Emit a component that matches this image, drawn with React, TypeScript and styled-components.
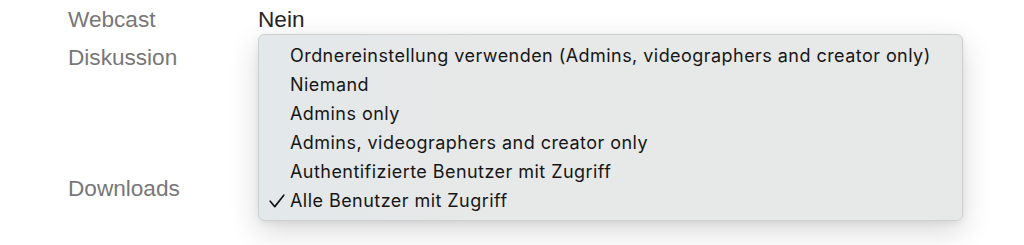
import React from "react";
import styled, { createGlobalStyle } from "styled-components";

const GlobalStyle = createGlobalStyle`
  html, body {
    margin: 0;
    padding: 0;
    background: #ffffff;
  }
  body {
    font-family: "Liberation Sans", Arial, sans-serif;
  }
`;

const SPage = styled.div`
  width: 1024px;
  height: 245px;
  overflow: hidden;
  padding: 1px 0 0 68px;
  box-sizing: border-box;
`;

const SRow = styled.div<{ $height: number }>`
  display: grid;
  grid-template-columns: 190px 1fr;
  height: ${(p) => p.$height}px;
  font-size: 22.6px;
  line-height: 38px;
`;

const SLabel = styled.div`
  color: #777777;
`;

const SValue = styled.div`
  position: relative;
  color: #262626;
`;

const SMenu = styled.ul`
  position: absolute;
  top: -5px;
  left: 0;
  width: 705px;
  margin: 0;
  padding: 6px 0 5px;
  box-sizing: border-box;
  list-style: none;
  background: linear-gradient(90deg, #e3e8ea 0%, #e7e8e8 30%, #e7e8e8 100%);
  border: 1px solid #cdcfcf;
  border-radius: 6px;
  box-shadow: 0 10px 30px rgba(0, 0, 0, 0.16), 0 2px 6px rgba(0, 0, 0, 0.06);
  font-family: Inter, "Liberation Sans", sans-serif;
  font-size: 18px;
  letter-spacing: 0.45px;
  line-height: 29px;
  color: #161616;
`;

const SItem = styled.li`
  position: relative;
  padding-left: 31px;
  white-space: nowrap;
`;

const SCheck = styled.svg`
  position: absolute;
  left: 10px;
  top: 8px;
`;

const OPTIONS = [
  "Ordnereinstellung verwenden (Admins, videographers and creator only)",
  "Niemand",
  "Admins only",
  "Admins, videographers and creator only",
  "Authentifizierte Benutzer mit Zugriff",
  "Alle Benutzer mit Zugriff",
];

const SELECTED = "Alle Benutzer mit Zugriff";

const App = () => (
  <>
    <GlobalStyle />
    <SPage>
      <SRow $height={38}>
        <SLabel>Webcast</SLabel>
        <SValue>Nein</SValue>
      </SRow>
      <SRow $height={131}>
        <SLabel>Diskussion</SLabel>
        <SValue>
          <SMenu>
            {OPTIONS.map((o) => (
              <SItem key={o}>
                {o === SELECTED && (
                  <SCheck width="16" height="14" viewBox="0 0 16 14">
                    <polyline
                      points="1.2,7.2 5.8,12.6 14.8,1.2"
                      fill="none"
                      stroke="#161616"
                      strokeWidth="1.7"
                      strokeLinecap="round"
                      strokeLinejoin="round"
                    />
                  </SCheck>
                )}
                {o}
              </SItem>
            ))}
          </SMenu>
        </SValue>
      </SRow>
      <SRow $height={38}>
        <SLabel>Downloads</SLabel>
        <SValue />
      </SRow>
    </SPage>
  </>
);

export default App;
